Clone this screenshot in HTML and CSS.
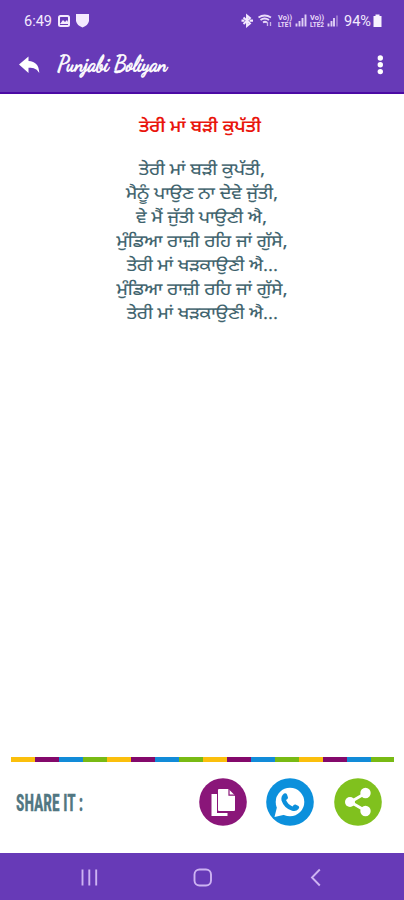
FILE: index.html
```html
<!DOCTYPE html>
<html lang="pa">
<head>
<meta charset="utf-8">
<title>Punjabi Boliyan</title>
<link rel="stylesheet" href="styles.css">
</head>
<body>
<div class="app">
  <header class="header">
    <svg class="status" viewBox="0 0 404 42">
      <text class="clock" x="24" y="26" textLength="28" lengthAdjust="spacingAndGlyphs">6:49</text>
      <rect x="59" y="16" width="10" height="10" rx="1.500" fill="none" stroke="#f4eafe" stroke-width="2"/>
      <path d="M60 24l3-4 2 2 2-2 2 4z" fill="#f4eafe"/>
      <path d="M76 14h13v7q-1 4.500-6.500 6.500Q77 25.500 76 21z" fill="#f4eafe"/>
      <path d="M243.500 17.500l6.500 6-3 2.500V15.500l3 2.500-6.500 6" fill="none" stroke="#f4eafe" stroke-width="1.900"/>
      <path d="M241.500 20.700h3M249.500 20.700h3.500" stroke="#f4eafe" stroke-width="2.200"/>
      <path d="M258.500 17.500q6-4 12.500 0M260.500 20q4-3 8.500 0M263 22.500q2-1.500 4 0" fill="none" stroke="#eadcf9" stroke-width="1.800"/>
      <path d="M267.500 26v-4M270.500 22v4" stroke="#c9b2e8" stroke-width="1.300"/>
      <text class="lte" x="278" y="20" textLength="14" lengthAdjust="spacingAndGlyphs">Vo))</text>
      <text class="lte" x="278" y="26.800" textLength="14" lengthAdjust="spacingAndGlyphs">LTE1</text>
      <path d="M296.500 26.500v-3M299.500 26.500v-5.500M302.500 26.500v-8.500M305.500 26.500v-12" stroke="#dfcff5" stroke-width="1.900"/>
      <text class="lte" x="310" y="20" textLength="14" lengthAdjust="spacingAndGlyphs">Vo))</text>
      <text class="lte" x="310" y="26.800" textLength="14" lengthAdjust="spacingAndGlyphs">LTE2</text>
      <path d="M328.500 26.500v-3M331.500 26.500v-5.500M334 26.500v-8.500" stroke="#dfcff5" stroke-width="1.900"/>
      <path d="M337 26.500v-11" stroke="#a98ad6" stroke-width="1.500"/>
      <text class="clock" x="344" y="26" textLength="27" lengthAdjust="spacingAndGlyphs">94%</text>
      <path d="M375.500 14.500h4v1.500h2v11h-8V16h2z" fill="#f8f2ff"/>
    </svg>
    <svg class="toolbar" viewBox="0 42 404 50">
      <path d="M19 64.500l9.500-8v4.500c7 .5 10.500 4 10.800 12-2.500-4-5-5.300-10.800-5.300V73z" fill="#fff"/>
      <text class="brand" transform="translate(57 71) skewX(7)" x="0" y="0" textLength="110" lengthAdjust="spacingAndGlyphs">Punjabi Boliyan</text>
      <g fill="#fff"><circle cx="380.300" cy="58" r="2.700"/><circle cx="380.300" cy="64.800" r="2.700"/><circle cx="380.300" cy="71.600" r="2.700"/></g>
    </svg>
  </header>
  <main class="content">
    <svg class="verse" viewBox="0 94 404 250">
      <text class="title" x="139" y="132" textLength="122" lengthAdjust="spacingAndGlyphs">ਤੇਰੀ ਮਾਂ ਬੜੀ ਕੁਪੱਤੀ</text>
      <text x="139" y="175.400" textLength="126" lengthAdjust="spacingAndGlyphs">ਤੇਰੀ ਮਾਂ ਬੜੀ ਕੁਪੱਤੀ,</text>
      <text x="126" y="199.400" textLength="152" lengthAdjust="spacingAndGlyphs">ਮੈਨੂੰ ਪਾਉਣ ਨਾ ਦੇਵੇ ਜੁੱਤੀ,</text>
      <text x="136" y="223.400" textLength="131" lengthAdjust="spacingAndGlyphs">ਵੇ ਮੈਂ ਜੁੱਤੀ ਪਾਉਣੀ ਐ,</text>
      <text x="116.500" y="247.400" textLength="171" lengthAdjust="spacingAndGlyphs">ਮੁੰਡਿਆ ਰਾਜ਼ੀ ਰਹਿ ਜਾਂ ਗੁੱਸੇ,</text>
      <text x="127" y="271.400" textLength="151" lengthAdjust="spacingAndGlyphs">ਤੇਰੀ ਮਾਂ ਖੜਕਾਉਣੀ ਐ...</text>
      <text x="116.500" y="295.400" textLength="171" lengthAdjust="spacingAndGlyphs">ਮੁੰਡਿਆ ਰਾਜ਼ੀ ਰਹਿ ਜਾਂ ਗੁੱਸੇ,</text>
      <text x="127" y="319.400" textLength="151" lengthAdjust="spacingAndGlyphs">ਤੇਰੀ ਮਾਂ ਖੜਕਾਉਣੀ ਐ...</text>
    </svg>
  </main>
  <div class="stripe"></div>
  <section class="share">
    <svg class="label" viewBox="0 0 120 40"><text x="0" y="27" textLength="67" lengthAdjust="spacingAndGlyphs">SHARE IT :</text></svg>
    <div class="actions">
      <svg class="action" viewBox="0 0 48 48">
        <circle cx="24" cy="24" r="23.800" fill="#8a1679"/>
        <path d="M12.500 16h5.500v19h10.500v3h-16z" fill="#fff"/>
        <path d="M20 11h9.500l6.500 6.500V32q0 1-1 1H20q-1 0-1-1V12q0-1 1-1z" fill="#fff"/>
        <path d="M30 11v6.200h6" fill="none" stroke="#8a1679" stroke-width="1.200"/>
      </svg>
      <svg class="action" viewBox="0 0 48 48">
        <circle cx="24" cy="24" r="23.800" fill="#0c90dc"/>
        <circle cx="24" cy="24" r="14.300" fill="#fff"/>
        <path d="M11 29L8.500 39l11-2.500z" fill="#fff"/>
        <path d="M18 15.500q2-1 3 1l1 3q0 1.500-2 2.500 2 4.500 6.500 6.500 1.500-2.500 3-2l3 1.500q1.500 1 0 3-2.500 3-7 1.500-7.500-2.500-10-10-.8-4.500 2.500-7z" fill="#0c90dc"/>
      </svg>
      <svg class="action" viewBox="0 0 48 48">
        <circle cx="24" cy="24" r="23.800" fill="#80c11e"/>
        <path d="M31 15.500L16.500 24 31 32.500" fill="none" stroke="#fff" stroke-width="3"/>
        <g fill="#fff"><circle cx="16" cy="24" r="5"/><circle cx="31.500" cy="15" r="5.200"/><circle cx="31.500" cy="33" r="5.200"/></g>
      </svg>
    </div>
  </section>
  <svg class="nav" viewBox="0 853 404 47">
    <g fill="none" stroke="#cdb3f2" stroke-width="1.900">
      <path d="M82.500 869.500v16M89.300 869.500v16M96.200 869.500v16"/>
      <rect x="194.500" y="869.500" width="16.500" height="16" rx="5"/>
      <path d="M319.800 869.500l-7.800 8 7.800 8"/>
    </g>
  </svg>
</div>
</body>
</html>
```

FILE: styles.css
```css
body { margin: 0; background: #fff; }
svg { display: block; }
.app { width: 404px; height: 900px; display: flex; flex-direction: column; overflow: hidden; font-family: Roboto, sans-serif; }
.header { background: #673ab7; border-bottom: 2px solid #4b0aa4; }
.status { width: 404px; height: 42px; }
.toolbar { width: 404px; height: 50px; }
.clock { font: 14px Roboto, sans-serif; fill: #f4eafe; }
.lte { font: bold 7px Roboto, sans-serif; fill: #eadcf9; }
.brand { font: italic 700 23px "Dancing Script", Pacifico, "Brush Script MT", cursive; fill: #fff; stroke: #fff; stroke-width: 0.6px; }
.content { flex: 1; }
.verse { width: 404px; height: 250px; font: 400 17px "Noto Sans Gurmukhi", "Noto Sans", sans-serif; fill: #3d626c; stroke: #3d626c; stroke-width: 0.15px; text-rendering: geometricPrecision; }
.title { font-weight: 600; fill: #e9150c; stroke: none; }
.stripe { height: 5px; margin: 0 10px 0 11px; background: repeating-linear-gradient(90deg, #fbbf0c 0 24px, #83096b 24px 48px, #128bd8 48px 72px, #78ba14 72px 96px); }
.share { height: 91px; box-sizing: border-box; padding: 16px 22.5px 0 16px; display: flex; justify-content: space-between; align-items: flex-start; }
.label { width: 120px; height: 40px; margin-top: 6px; overflow: visible; font: bold 23px "Roboto Condensed", Roboto, sans-serif; fill: #517782; stroke: #517782; stroke-width: 0.3px; }
.actions { display: flex; gap: 19.5px; }
.action { width: 48px; height: 48px; }
.nav { width: 404px; height: 47px; background: #673ab7; }
```
